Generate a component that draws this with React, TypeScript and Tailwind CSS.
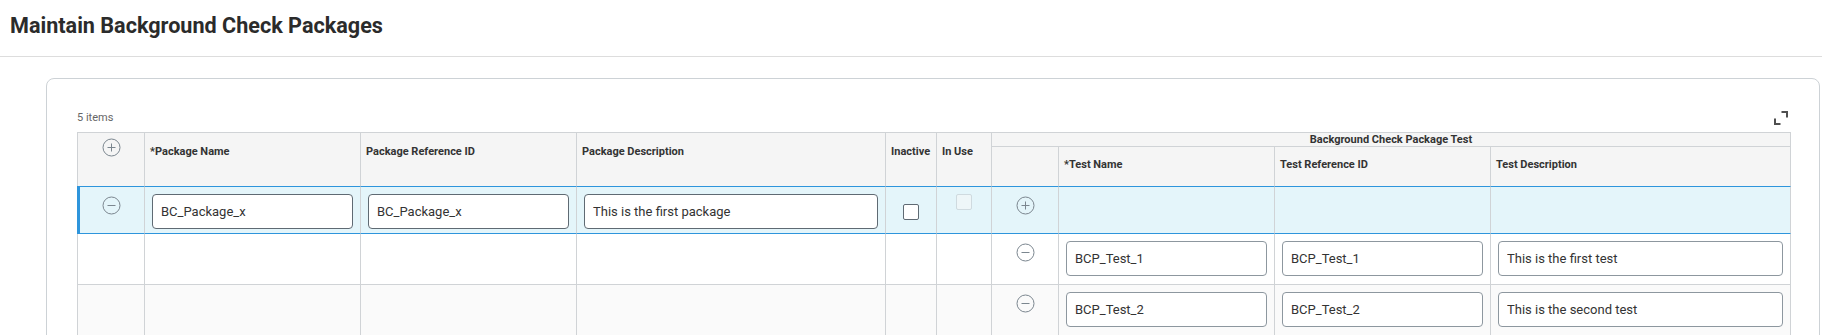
import React from 'react';

const font = { fontFamily: 'Roboto, "Noto Sans", Arial, sans-serif' };

const CircleIcon: React.FC<{ plus?: boolean }> = ({ plus }) => (
  <svg width="19" height="19" viewBox="0 0 19 19" fill="none" stroke="#7b868f" strokeWidth="1">
    <circle cx="9.5" cy="9.5" r="8.5" />
    <line x1="5.5" y1="9.5" x2="13.5" y2="9.5" />
    {plus && <line x1="9.5" y1="5.5" x2="9.5" y2="13.5" />}
  </svg>
);

const ExpandIcon: React.FC = () => (
  <svg width="14" height="14" viewBox="0 0 14 14" fill="none" stroke="#4f4f4f" strokeWidth="2">
    <path d="M7.5 1 H13 V6.5" />
    <path d="M1 7.5 V13 H6.5" />
  </svg>
);

const Field: React.FC<{ value: string; active?: boolean }> = ({ value, active }) => (
  <input
    readOnly
    value={value}
    className={`h-[35px] w-full rounded-[4px] border bg-white pl-[8px] text-[13px] text-[#333] outline-none ${
      active ? 'border-[#5f6a73]' : 'border-[#8d979f]'
    }`}
  />
);

const HeadCell: React.FC<{ label?: string; first?: boolean; children?: React.ReactNode }> = ({ label, first, children }) => (
  <div
    className={`row-span-2 border-t border-r border-[#d0d3d6] bg-[#f5f5f5] ${first ? 'border-l flex justify-center pt-[5px]' : 'pl-[5px] pt-[12px]'}`}
  >
    {label && <div className="text-[11px] font-bold leading-[14px] text-[#333]">{label}</div>}
    {children}
  </div>
);

const SubHead: React.FC<{ label?: string }> = ({ label }) => (
  <div className="border-r border-[#d0d3d6] bg-[#f5f5f5] pl-[5px] pt-[11px]">
    {label && <div className="text-[11px] font-bold leading-[14px] text-[#333]">{label}</div>}
  </div>
);

const Cell: React.FC<{ bg: string; first?: boolean; children?: React.ReactNode; className?: string }> = ({
  bg,
  first,
  children,
  className = '',
}) => (
  <div className={`border-r border-b border-[#d0d3d6] ${bg} ${first ? 'border-l' : ''} ${className}`}>{children}</div>
);

const SelCell: React.FC<{ first?: boolean; children?: React.ReactNode; className?: string }> = ({
  first,
  children,
  className = '',
}) => (
  <div
    className={`border-r border-r-[#d0d3d6] border-y border-y-[#2e95dc] bg-[#e4f5fa] ${
      first ? 'border-l-[3px] border-l-[#2e95dc]' : ''
    } ${className}`}
  >
    {children}
  </div>
);

const tests = [
  { name: 'BCP_Test_1', ref: 'BCP_Test_1', desc: 'This is the first test', bg: 'bg-white' },
  { name: 'BCP_Test_2', ref: 'BCP_Test_2', desc: 'This is the second test', bg: 'bg-[#fafafa]' },
  { name: 'BCP_Test_3', ref: 'BCP_Test_3', desc: 'This is the third test', bg: 'bg-white' },
];

export default function App() {
  return (
    <div className="min-h-screen bg-white" style={font}>
      <div className="h-[57px] border-b border-[#dddddd] pl-[10px] pt-[12px]">
        <h1 className="text-[21.6px] font-bold leading-[28px] text-[#2b2b2b]">Maintain Background Check Packages</h1>
      </div>

      <div className="ml-[46px] mr-[2px] mt-[21px] rounded-[8px] border border-[#cdd2d6] pl-[30px] pr-[28px] pt-[29px] pb-[30px]">
        <div className="mb-[4px] flex h-[20px] items-center justify-between">
          <span className="text-[11px] text-[#666]">5 items</span>
          <span className="mr-[3px] flex">
            <ExpandIcon />
          </span>
        </div>

        <div className="grid grid-cols-[68px_216px_216px_309px_51px_55px_67px_216px_216px_300px] grid-rows-[15px_39px_48px_51px_51px_51px]">
          <HeadCell first>
            <CircleIcon plus />
          </HeadCell>
          <HeadCell label="*Package Name" />
          <HeadCell label="Package Reference ID" />
          <HeadCell label="Package Description" />
          <HeadCell label="Inactive" />
          <HeadCell label="In Use" />
          <div className="col-span-4 border-t border-r border-b border-[#d0d3d6] bg-[#f5f5f5] text-center text-[11px] font-bold leading-[13px] text-[#333]">
            Background Check Package Test
          </div>
          <SubHead />
          <SubHead label="*Test Name" />
          <SubHead label="Test Reference ID" />
          <SubHead label="Test Description" />

          <SelCell first className="flex justify-center pt-[9px]">
            <span className="-ml-[2px] flex">
              <CircleIcon />
            </span>
          </SelCell>
          <SelCell className="px-[7px] pt-[7px]">
            <Field value="BC_Package_x" active />
          </SelCell>
          <SelCell className="px-[7px] pt-[7px]">
            <Field value="BC_Package_x" active />
          </SelCell>
          <SelCell className="px-[7px] pt-[7px]">
            <Field value="This is the first package" active />
          </SelCell>
          <SelCell className="flex justify-center pt-[17px]">
            <span className="h-[16px] w-[16px] rounded-[2px] border border-[#5f6a73] bg-white" />
          </SelCell>
          <SelCell className="flex justify-center pt-[7px]">
            <span className="h-[16px] w-[16px] rounded-[2px] border border-[#cfdadf] bg-[#eef6f8]" />
          </SelCell>
          <SelCell className="flex justify-center pt-[9px]">
            <CircleIcon plus />
          </SelCell>
          <SelCell />
          <SelCell />
          <SelCell />

          {tests.map((t) => (
            <React.Fragment key={t.name}>
              <Cell bg={t.bg} first />
              <Cell bg={t.bg} />
              <Cell bg={t.bg} />
              <Cell bg={t.bg} />
              <Cell bg={t.bg} />
              <Cell bg={t.bg} />
              <Cell bg={t.bg} className="flex justify-center pt-[9px]">
                <CircleIcon />
              </Cell>
              <Cell bg={t.bg} className="px-[7px] pt-[7px]">
                <Field value={t.name} />
              </Cell>
              <Cell bg={t.bg} className="px-[7px] pt-[7px]">
                <Field value={t.ref} />
              </Cell>
              <Cell bg={t.bg} className="px-[7px] pt-[7px]">
                <Field value={t.desc} />
              </Cell>
            </React.Fragment>
          ))}
        </div>
      </div>
    </div>
  );
}
